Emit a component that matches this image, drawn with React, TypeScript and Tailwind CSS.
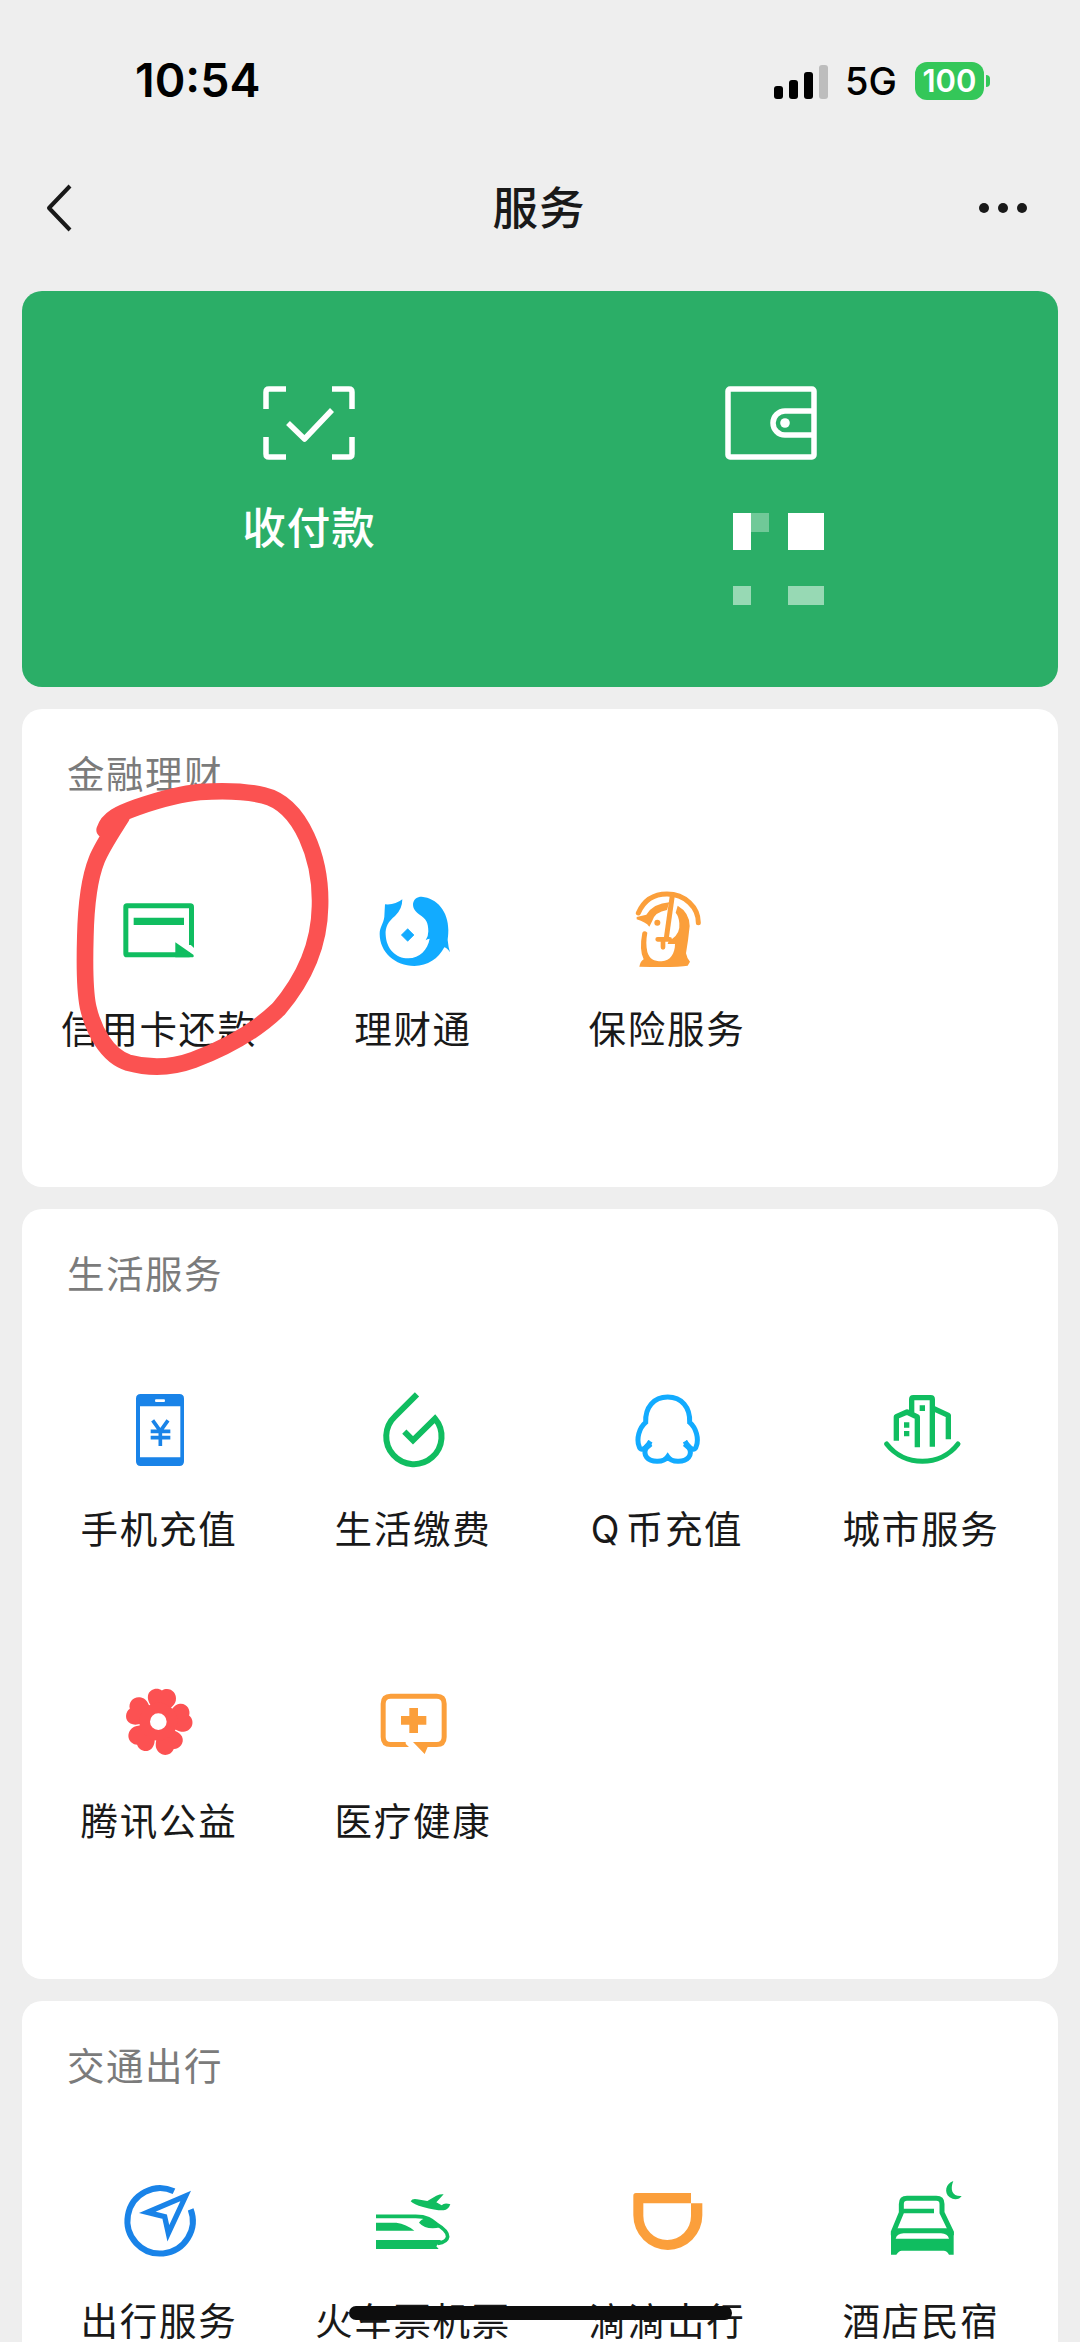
import type { ReactNode } from 'react';

interface Service {
  name: string;
  icon: ReactNode;
}

interface Section {
  title: string;
  items: Service[];
}

const GREEN = '#10bd60';
const BLUE = '#1983e8';
const SKY = '#12abff';
const ORANGE = '#fb9f3b';
const RED = '#fc5152';

function Icon({ children }: { children: ReactNode }) {
  return (
    <svg viewBox="0 0 240 240" fill="none" className="h-20 w-20 overflow-visible">
      {children}
    </svg>
  );
}

const CardIcon = () => (
  <Icon>
    <path d="M217.5 165V51Q217.5 47.500 214 47.500H24Q20.500 47.500 20.500 51V191Q20.500 194.500 24 194.500H212" stroke={GREEN} strokeWidth="15" />
    <path d="M44 83H195V105H44Z" fill={GREEN} />
    <path d="M210 160L225 174V160Z" fill={GREEN} />
    <path d="M169 157L223 194Q227 202 218 202H169Z" fill={GREEN} />
  </Icon>
);

const WealthIcon = () => (
  <Icon>
    <path
      d="M36 43Q66 46 88 28Q88 58 66 78C46 94 36 112 38 134C40 176 68 205 106 205C140 204 164 180 170 146Q163 147 158 151Q166 140 166 124C166 96 158 86 140 74C126 64 120 56 120 42C122 26 132 20 146 20C192 24 226 64 226 120C226 136 224 146 224 150Q226 172 231 187Q222 174 214 172C196 206 164 228 124 228C66 228 20 186 20 132C20 110 32 100 34 80Q35 60 36 43Z"
      fill={SKY}
    />
    <path d="M104 116L123 135L104 154L85 135Z" fill={SKY} stroke={SKY} strokeWidth="2" strokeLinejoin="round" />
  </Icon>
);

const InsuranceIcon = () => (
  <Icon>
    <path d="M34 69C50 32 80 12 120 12C174 12 214 52 214 98" stroke={ORANGE} strokeWidth="15" strokeLinecap="round" />
    <path d="M29 81L58 74Q80 40 127 37L120 60Q84 66 76 92L67 110Q56 96 29 88Z" fill={ORANGE} />
    <circle cx="91" cy="98" r="9" fill={ORANGE} />
    <path d="M136 16L118 144" stroke={ORANGE} strokeWidth="15" />
    <path d="M92 148H128M108 148V172" stroke={ORANGE} strokeWidth="14" strokeLinecap="round" />
    <path
      d="M152 47Q188 68 188 108Q184 150 177 190Q180 206 189 215L182 227Q150 233 37 230Q40 214 50 208Q36 180 46 128Q52 120 61 128C57 150 57 166 61 186C67 206 80 214 104 214C130 213 144 190 144 162H122Q124 150 136 146Q160 130 157 100Q156 80 146 68Z"
      fill={ORANGE}
    />
  </Icon>
);

const PhoneIcon = () => (
  <Icon>
    <path fillRule="evenodd" d="M65 12H181Q195 12 195 26V214Q195 228 181 228H65Q51 228 51 214V26Q51 12 65 12ZM63 49V202H184V49ZM111 28Q108 28 108 32T111 36H135Q138 36 138 32T135 28Z" fill={BLUE} />
    <path d="M101 91L124 123L147 91M95 124H154M95 143H154M124 121V168" stroke={BLUE} strokeWidth="11" />
  </Icon>
);

const BillIcon = () => (
  <Icon>
    <path d="M132 13L66 79A83 83 0 1 0 186 86L120 151L94 125" stroke={GREEN} strokeWidth="18" />
  </Icon>
);

const QCoinIcon = () => (
  <Icon>
    <path
      d="M70 154L64 164C52 178 40 184 36 168C28 146 36 114 56 97C54 52 80 21 122 21C164 21 190 52 188 97C208 114 216 146 208 168C204 184 192 178 180 164L174 154"
      stroke={SKY}
      strokeWidth="15"
    />
    <path d="M58 172C46 196 62 215 92 214C108 214 118 206 122 200C126 206 136 214 152 214C182 215 198 196 186 172" stroke={SKY} strokeWidth="15" />
    <path d="M38 182L66 150L76 168L58 184ZM206 182L178 150L168 168L186 184Z" fill={SKY} />
  </Icon>
);

const CityIcon = () => (
  <Icon>
    <path d="M17 162C70 231 178 231 231 162" stroke={GREEN} strokeWidth="15" strokeLinecap="round" />
    <path d="M46 152V80L78 66L109 81V172M92 70V28Q92 23 97 23H149Q154 23 154 28V170M154 54L202 76V148" stroke={GREEN} strokeWidth="16" strokeLinejoin="round" />
    <path d="M116 46H132V63H116ZM69 97H85V113H69ZM69 123H85V139H69Z" fill={GREEN} />
  </Icon>
);

const CharityIcon = () => (
  <Icon>
    {[9, 81, 153, 225, 297].map(deg => (
      <path
        key={deg}
        transform={`translate(118 119) rotate(${deg})`}
        d="M-12 -30C-26 -40 -43 -54 -43 -72C-42 -94 -18 -102 -4 -94C14 -110 43 -98 42 -70C40 -54 26 -40 12 -30Z"
        fill={RED}
      />
    ))}
    <circle cx="118" cy="119" r="41" stroke={RED} strokeWidth="32" />
  </Icon>
);

const HealthIcon = () => (
  <Icon>
    <path d="M98 187.500H53Q30.500 187.500 30.500 165V65Q30.500 42.500 53 42.500H191Q213.500 42.500 213.500 65V165Q213.500 187.500 191 187.500H140" stroke={ORANGE} strokeWidth="15" />
    <path d="M92 180L108 195H92ZM120 180H150V195H164L155 216Z" fill={ORANGE} />
    <path d="M109 78H135V102H160V128H135V153H109V128H84V102H109Z" fill={ORANGE} />
  </Icon>
);

const TravelIcon = () => (
  <Icon>
    <path d="M165 28A98 98 0 1 0 215 82" stroke={BLUE} strokeWidth="18" />
    <path d="M200 42L85 91L137 104L148 154Z" stroke={BLUE} strokeWidth="16" />
  </Icon>
);

const TrainIcon = () => (
  <Icon>
    <path d="M113 58Q118 49 132 52L163 57L190 41Q202 36 212 37L190 61L206 70Q214 61 232 67Q226 84 212 85Q190 86 150 75Q122 68 113 58Z" fill={GREEN} />
    <path d="M9 103H128C165 103 178 116 190 126C214 140 224 150 224 164Q222 180 194 184" stroke={GREEN} strokeWidth="11" />
    <path d="M138 122Q146 106 172 110L202 136Q160 146 138 122ZM9 122H70Q100 126 124 146H9ZM9 174H204L190 193L197 201H9Z" fill={GREEN} />
  </Icon>
);

const DidiIcon = () => (
  <Icon>
    <path fillRule="evenodd" d="M27 33H192V64H226V100A103.500 104 0 0 1 19 100V41Q19 33 27 33ZM49 64V102A71.500 72 0 0 0 192 102V64Z" fill={ORANGE} />
  </Icon>
);

const HotelIcon = () => (
  <Icon>
    <path d="M37 160V150L61 92V66Q61 49 78 49H166Q183 49 183 66V92L211 150V160" stroke={GREEN} strokeWidth="15" />
    <path d="M62 87H159" stroke={GREEN} strokeWidth="13" />
    <path fillRule="evenodd" d="M30 150L44 139H204L218 150V218H204Q198 206 188 206H62Q54 206 46 218H30ZM44 170H204Q200 155 180 154H68Q48 155 44 170Z" fill={GREEN} />
    <path d="M217 -3C194 4 188 32 206 46C220 56 236 52 242 42C214 44 206 24 217 -3Z" fill={GREEN} />
  </Icon>
);

const sections: Section[] = [
  {
    title: '金融理财',
    items: [
      { name: '信用卡还款', icon: <CardIcon /> },
      { name: '理财通', icon: <WealthIcon /> },
      { name: '保险服务', icon: <InsuranceIcon /> },
    ],
  },
  {
    title: '生活服务',
    items: [
      { name: '手机充值', icon: <PhoneIcon /> },
      { name: '生活缴费', icon: <BillIcon /> },
      { name: 'Q币充值', icon: <QCoinIcon /> },
      { name: '城市服务', icon: <CityIcon /> },
      { name: '腾讯公益', icon: <CharityIcon /> },
      { name: '医疗健康', icon: <HealthIcon /> },
    ],
  },
  {
    title: '交通出行',
    items: [
      { name: '出行服务', icon: <TravelIcon /> },
      { name: '火车票机票', icon: <TrainIcon /> },
      { name: '滴滴出行', icon: <DidiIcon /> },
      { name: '酒店民宿', icon: <HotelIcon /> },
    ],
  },
];

function StatusBar() {
  return (
    <div className="flex h-[162px] items-center justify-between pr-[90px] pl-[135px] text-black">
      <div className="pb-0.5 text-[46.5px] leading-none font-semibold">10:54</div>
      <div className="flex items-center">
        <div className="mt-px mr-[17px] flex items-end gap-[6px]">
          <div className="h-[13px] w-[9px] rounded-[3px] bg-black" />
          <div className="h-[19px] w-[9px] rounded-[3px] bg-black" />
          <div className="h-[27px] w-[9px] rounded-[3px] bg-black" />
          <div className="h-[34px] w-[9px] rounded-[3px] bg-[#bdbdbd]" />
        </div>
        <div className="mr-[18px] text-[38px] leading-none font-medium">5G</div>
        <div className="flex h-[38px] w-[69px] items-center justify-center rounded-xl bg-[#34c759] pb-0.5 text-[31px] leading-none font-semibold text-white">100</div>
        <div className="ml-0.5 h-3 w-1 rounded-r-full bg-[#34c759]" />
      </div>
    </div>
  );
}

function NavBar() {
  return (
    <div className="grid h-[92px] grid-cols-3 items-center pr-[53px] pl-[45px] text-[#191919]">
      <svg viewBox="0 0 28 50" fill="none" className="h-[50px] w-7">
        <path d="M25 3L4 25L25 47" stroke="currentColor" strokeWidth="4" strokeLinejoin="round" />
      </svg>
      <h1 className="mt-0.5 pl-1.5 text-center text-[45.5px] leading-none font-medium tracking-[1px]">服务</h1>
      <div className="flex justify-end gap-[9px]">
        <span className="h-2.5 w-2.5 rounded-full bg-[#191919]" />
        <span className="h-2.5 w-2.5 rounded-full bg-[#191919]" />
        <span className="h-2.5 w-2.5 rounded-full bg-[#191919]" />
      </div>
    </div>
  );
}

function PayCard() {
  return (
    <div className="flex h-[396px] rounded-[20px] bg-[#2bae67] px-14 pt-[92px] text-white">
      <div className="flex w-[462px] flex-col items-center">
        <svg viewBox="0 0 92 80" fill="none" className="h-20 w-[92px]">
          <path d="M23 6H6Q3 6 3 9V26M69 6H86Q89 6 89 9V26M3 54V71Q3 74 6 74H23M89 54V71Q89 74 86 74H69" stroke="currentColor" strokeWidth="5.500" />
          <path d="M25 40L41.500 56L69 27" stroke="currentColor" strokeWidth="5.500" strokeLinejoin="round" />
        </svg>
        <div className="mt-10 text-[43.5px] leading-[50px] font-medium tracking-[1px]">收付款</div>
      </div>
      <div className="flex w-[462px] flex-col items-center">
        <svg viewBox="0 0 92 80" fill="none" className="h-20 w-[92px]">
          <rect x="3" y="6" width="86" height="68" rx="2" stroke="currentColor" strokeWidth="5.500" />
          <path d="M88 28H60A12 12 0 0 0 60 52H88" stroke="currentColor" strokeWidth="5.500" />
          <circle cx="60" cy="40" r="4.800" fill="currentColor" />
        </svg>
        {/* 钱包文字与余额打码 */}
        <div className="mt-[50px] ml-3.5 flex h-[37px] w-[91px]">
          <div className="w-[18px] bg-white" />
          <div className="mr-[19px] h-[19px] w-[18px] bg-[#70c998]" />
          <div className="w-9 bg-white" />
        </div>
        <div className="mt-9 ml-3.5 flex h-[19px] w-[91px]">
          <div className="mr-[37px] w-[18px] bg-[#97d9b4]" />
          <div className="w-9 bg-[#97d9b4]" />
        </div>
      </div>
    </div>
  );
}

function SectionCard({ title, items }: Section) {
  return (
    <section className="rounded-[20px] bg-white px-2.5 pt-[41px] pb-[69px]">
      <h2 className="mb-[27px] pl-[35px] text-[37.5px] leading-[50px] tracking-[1.5px] text-[#7b7b7b]">{title}</h2>
      <div className="grid grid-cols-4">
        {items.map(item => (
          <div key={item.name} className="flex h-[291.25px] flex-col items-center pt-[63px]">
            {item.icon}
            <div className="mt-10 text-[37.5px] leading-10 tracking-[1.7px] whitespace-nowrap text-[#191919] [text-autospace:normal]">{item.name}</div>
          </div>
        ))}
      </div>
    </section>
  );
}

// 手绘红圈
function RedCircle() {
  return (
    <svg viewBox="0 0 1020 1110" fill="none" className="absolute top-[720px] left-10 h-[370px] w-[340px]">
      <path
        d="M194 330C205 295 240 280 290 262C360 238 430 220 480 216C540 212 620 214 670 226C730 240 770 285 800 350C832 420 842 500 840 560C838 680 790 780 715 868C640 940 540 990 460 1020C400 1042 330 1046 265 1028C200 1008 160 930 144 860C132 800 134 720 136 650C138 560 146 480 170 420C186 380 220 330 245 290"
        stroke="#fb5251"
        strokeWidth="50"
        strokeLinecap="round"
        strokeLinejoin="round"
      />
    </svg>
  );
}

export default function App() {
  return (
    <div className="relative h-[2342px] w-[1080px] overflow-hidden bg-[#eeeeee] font-['Inter','Noto_Sans_CJK_SC',sans-serif]">
      <StatusBar />
      <NavBar />
      <main className="mt-[37px] flex flex-col gap-[22px] px-[22px]">
        <PayCard />
        {sections.map(section => (
          <SectionCard key={section.title} title={section.title} items={section.items} />
        ))}
      </main>
      <RedCircle />
      <div className="absolute top-[2306px] left-[349px] h-3.5 w-[383px] rounded-full bg-[#0d0d0d]" />
    </div>
  );
}
